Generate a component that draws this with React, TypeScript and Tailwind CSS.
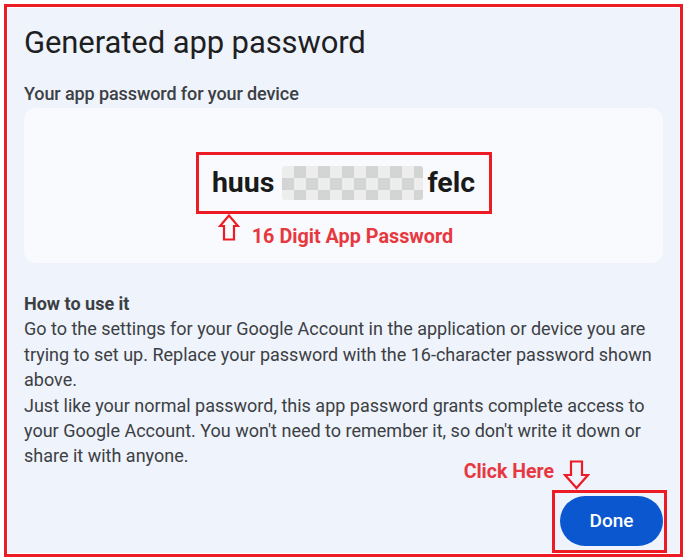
import React from "react";

function UpArrow() {
  return (
    <svg width="22" height="27" viewBox="0 0 22 27" className="block">
      <path
        d="M11 1.5 L2 12 L6 12 L6 25.5 L16 25.5 L16 12 L20 12 Z"
        fill="none"
        stroke="#ed1c24"
        strokeWidth="2.2"
        strokeLinejoin="miter"
      />
    </svg>
  );
}

function DownArrow() {
  return (
    <svg width="27" height="30" viewBox="0 0 27 30" className="block">
      <path
        d="M8 1.5 L19 1.5 L19 15 L25 15 L13.5 28 L2 15 L8 15 Z"
        fill="none"
        stroke="#ed1c24"
        strokeWidth="2.2"
        strokeLinejoin="miter"
      />
    </svg>
  );
}

export default function App() {
  return (
    <div className="w-[687px] h-[560px] bg-white p-1" style={{ fontFamily: "Roboto, 'Noto Sans', sans-serif" }}>
      <div className="h-[553px] border-[3px] border-[#ed1c24] p-px">
        <div className="h-full bg-[#eef3fc] px-4 flex flex-col">
          <h1 className="mt-[16px] text-[31px] leading-[38px] text-[#1f1f1f] font-normal tracking-[-0.1px]">
            Generated app password
          </h1>
          <div className="mt-[20px] text-[18px] leading-[24px] font-medium text-[#3c4043] tracking-[-0.1px]">
            Your app password for your device
          </div>
          <div className="mt-[2px] h-[155px] rounded-[12px] bg-[#f8fafe] flex flex-col items-center">
            <div className="mt-[44px] w-[296px] h-[62px] border-[3px] border-[#ed1c24] flex items-center justify-center">
              <span className="text-[28.5px] font-bold text-[#1a1a1a] leading-none mr-[8px]">huus</span>
              <span className="w-[141px] h-[34px] rounded-[3px] bg-[repeating-conic-gradient(#d0d0d0_0%_25%,#ececec_0%_50%)] bg-[length:24px_24px] opacity-90 mr-[4px]"></span>
              <span className="text-[28.5px] font-bold text-[#1a1a1a] leading-none">felc</span>
            </div>
            <div className="flex items-start ml-[-16px]">
              <div>
                <UpArrow />
              </div>
              <span className="ml-[12px] mt-[11px] text-[19.8px] leading-[24px] font-bold text-[#e8383f]">
                16 Digit App Password
              </span>
            </div>
          </div>
          <div className="mt-[28px] text-[18px] leading-[25.4px] text-[#3c4043] whitespace-nowrap">
            <div className="font-bold">How to use it</div>
            <div>Go to the settings for your Google Account in the application or device you are</div>
            <div>trying to set up. Replace your password with the 16-character password shown</div>
            <div>above.</div>
            <div>Just like your normal password, this app password grants complete access to</div>
            <div>your Google Account. You won't need to remember it, so don't write it down or</div>
            <div>share it with anyone.</div>
          </div>
          <div className="mt-[-9px] flex justify-end mr-[-4px]">
            <span className="mt-[0px] mr-[-2px] text-[19.5px] leading-[24px] font-bold text-[#e8383f] self-start">
              Click Here
            </span>
            <div className="flex flex-col">
              <div className="ml-[11px]">
                <DownArrow />
              </div>
              <div className="w-[115px] h-[63px] border-[3px] border-[#ed1c24] flex items-center justify-center">
                <button className="w-[103px] h-[50px] rounded-full bg-[#0b57d0] text-white text-[19px] font-medium ml-[4px]">
                  Done
                </button>
              </div>
            </div>
          </div>
        </div>
      </div>
    </div>
  );
}
